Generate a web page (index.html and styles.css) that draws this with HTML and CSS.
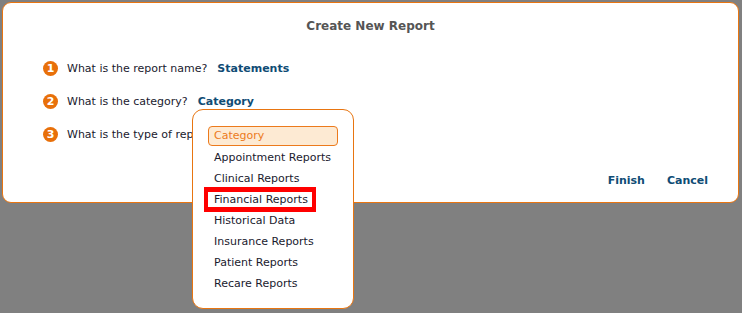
FILE: index.html
```html
<!DOCTYPE html>
<html lang="en">
<head>
    <meta charset="UTF-8">
    <title>Create New Report</title>
    <link rel="stylesheet" href="styles.css">
</head>
<body>
    <div class="dialog">
        <h1 class="title">Create New Report</h1>
        <div class="steps">
            <div class="step">
                <span class="num">1</span>
                <span class="question">What is the report name?</span>
                <span class="answer">Statements</span>
            </div>
            <div class="step">
                <span class="num">2</span>
                <span class="question">What is the category?</span>
                <span class="answer">Category</span>
            </div>
            <div class="step">
                <span class="num">3</span>
                <span class="question">What is the type of report?</span>
            </div>
        </div>
        <div class="actions">
            <a class="action">Finish</a>
            <a class="action">Cancel</a>
        </div>
    </div>

    <div class="menu">
        <div class="item selected">Category</div>
        <div class="item">Appointment Reports</div>
        <div class="item">Clinical Reports</div>
        <div class="item marked">Financial Reports</div>
        <div class="item">Historical Data</div>
        <div class="item">Insurance Reports</div>
        <div class="item">Patient Reports</div>
        <div class="item">Recare Reports</div>
    </div>
</body>
</html>
```

FILE: styles.css
```css
body {
    margin: 0;
    padding: 2px;
    background-color: #808080;
    font-family: "DejaVu Sans", Verdana, sans-serif;
    font-size: 11px;
    color: #1a1a2e;
    position: relative;
    height: 309px;
    overflow: hidden;
}
.dialog {
    width: 737px;
    height: 201px;
    background-color: #fff;
    border: 1px solid #e87511;
    border-radius: 9px;
    box-sizing: border-box;
    display: flex;
    flex-direction: column;
}
.title {
    margin: 16px 0 0 0;
    text-align: center;
    font-size: 12px;
    font-weight: bold;
    color: #555;
}
.steps {
    margin-top: 27px;
    padding-left: 40px;
    display: flex;
    flex-direction: column;
    gap: 17px;
}
.step {
    display: flex;
    align-items: center;
    height: 16px;
}
.num {
    width: 15px;
    height: 15px;
    border-radius: 50%;
    background-color: #e8700a;
    color: #fff;
    font-weight: bold;
    font-size: 11px;
    line-height: 15px;
    text-align: center;
    margin-right: 9px;
}
.answer {
    margin-left: 10px;
    font-weight: bold;
    color: #0f4c75;
}
.actions {
    margin-top: auto;
    margin-bottom: 15px;
    display: flex;
    justify-content: flex-end;
    gap: 22px;
    padding-right: 30px;
}
.action {
    font-weight: bold;
    color: #0f4c75;
    cursor: pointer;
}
.menu {
    position: absolute;
    left: 192px;
    top: 109px;
    width: 162px;
    height: 200px;
    box-sizing: border-box;
    background-color: #fff;
    border: 1px solid #e87511;
    border-radius: 11px;
    padding: 16px 15px 0 15px;
}
.item {
    height: 21px;
    line-height: 21px;
    padding-left: 6px;
    box-sizing: border-box;
}
.item.selected {
    height: 20px;
    line-height: 18px;
    padding-left: 5px;
    margin-bottom: 1px;
    background-color: #fdead3;
    border: 1px solid #ec7a1c;
    border-radius: 4px;
    color: #ec7a1c;
}
.item.marked {
    width: 112px;
    margin-left: -4px;
    padding-left: 6px;
    border: 4px solid #f00;
    border-top-width: 5px;
    border-bottom-width: 5px;
    height: 25px;
    line-height: 15px;
    margin-top: -2px;
    margin-bottom: -2px;
}
```
